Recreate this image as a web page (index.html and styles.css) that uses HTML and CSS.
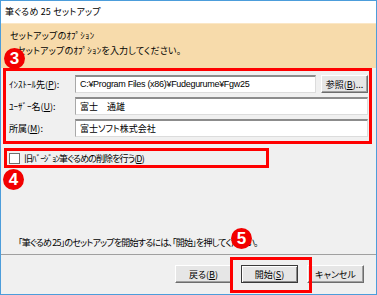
FILE: index.html
```html
<!DOCTYPE html>
<html lang="ja">
<head>
    <meta charset="UTF-8">
    <title>筆ぐるめ 25 セットアップ</title>
    <link rel="stylesheet" href="styles.css">
</head>
<body>
    <div class="window">
        <div class="titlebar">筆ぐるめ 25 セットアップ</div>

        <div class="header">
            <div class="header-title">セットアップのｵﾌﾟｼｮﾝ</div>
            <div class="header-desc">セットアップのｵﾌﾟｼｮﾝを入力してください。</div>
        </div>

        <div class="content">
            <div class="mark fields">
                <div class="row">
                    <label>ｲﾝｽﾄｰﾙ先(<u>P</u>):</label>
                    <div class="input input-path">C:¥Program Files (x86)¥Fudegurume¥Fgw25</div>
                    <button class="btn btn-browse">参照(<u>B</u>)...</button>
                </div>
                <div class="row">
                    <label>ﾕｰｻﾞｰ名(<u>U</u>):</label>
                    <div class="input">富士　通雄</div>
                </div>
                <div class="row">
                    <label>所属(<u>M</u>):</label>
                    <div class="input">富士ソフト株式会社</div>
                </div>
            </div>

            <div class="mark check-row">
                <span class="checkbox"></span>
                <span class="check-label">旧ﾊﾞｰｼﾞｮﾝ筆ぐるめの削除を行う(<u>D</u>)</span>
            </div>

            <p class="note">「筆ぐるめ 25」のセットアップを開始するには、「開始」を押してください。</p>
        </div>

        <div class="footer">
            <button class="btn">戻る(<u>B</u>)</button>
            <div class="mark-wrap">
                <button class="btn btn-default">開始(<u>S</u>)</button>
                <span class="mark-box"></span>
            </div>
            <button class="btn">キャンセル</button>
        </div>

        <span class="badge badge-3">3</span>
        <span class="badge badge-4">4</span>
        <span class="badge badge-5">5</span>
    </div>
</body>
</html>
```

FILE: styles.css
```css
* { box-sizing: border-box; }
body {
    margin: 0;
    font-family: "Noto Sans CJK JP", sans-serif;
    font-size: 9px; color: #000;
    font-feature-settings: "palt";
}
u { text-decoration-thickness: 1px; text-underline-offset: 1px; }

.window {
    position: relative; width: 377px; height: 295px;
    border: 1px solid #4c9ddb; background: #f0f0f0;
    display: flex; flex-direction: column;
}
.titlebar { height: 22px; background: #fff; padding-left: 4px; line-height: 22px; letter-spacing: 0.2px; }
.header {
    height: 45px; background: #f7dbab; border-top: 1px solid #fbe7c6;
    padding: 4px 0 0 9px; line-height: 15px; letter-spacing: 0.2px;
}
.header-desc { padding-left: 7px; }

.content { flex: 1; display: flex; flex-direction: column; padding: 0 4px 0 2px; }
.mark { border: 3px solid #ff0000; }
.fields { display: flex; flex-direction: column; gap: 4px; padding: 4px 1px 4px 3px; }
.row { display: flex; align-items: center; height: 18px; }
.row label { width: 66px; }
.input {
    flex: 1; height: 18px; background: #fff; padding-left: 4px; line-height: 15px;
    border: 1px solid #dcdcdc; border-top: 2px solid #8c8c8c; border-left-color: #a8a8a8;
}
.input-path { font-family: "Liberation Sans", "Noto Sans CJK JP", sans-serif; letter-spacing: -0.3px; }

.btn {
    font: inherit; color: inherit; height: 18px; padding: 0;
    background: #e6e6e6; cursor: pointer;
    border: 1px solid; border-color: #fff #6d6d6d #6d6d6d #fff;
    box-shadow: inset -1px -1px 0 #a0a0a0;
}
.btn-browse { width: 47px; margin-left: 5px; }

.check-row {
    display: flex; align-items: center; gap: 4px;
    width: 265px; height: 20px; margin: 4px 0 0 1px; padding-left: 2px;
}
.checkbox { width: 11px; height: 11px; background: #fff; border: 1px solid #707070; }
.check-label { letter-spacing: -0.9px; }

.note { margin: auto 0 4px 15px; line-height: 15px; letter-spacing: -0.8px; }

.footer {
    height: 40px; border-top: 1px solid #a0a0a0;
    display: flex; justify-content: flex-end; gap: 9px;
    padding: 10px 12px 0 0;
}
.footer .btn { width: 57px; }
.mark-wrap { position: relative; }
.btn-default { border-color: #3a3a3a; box-shadow: inset 1px 1px 0 #fff, inset -1px -1px 0 #8a8a8a; }
.mark-box {
    position: absolute; left: -11px; top: -8px; width: 82px; height: 36px;
    border: 3px solid #ff0000;
}

.badge {
    position: absolute; width: 21px; height: 21px; border-radius: 50%;
    background: #f20000; color: #fff; text-align: center;
    font: 900 17px/21px "Liberation Sans", sans-serif;
}
.badge-3 { left: 3px; top: 47px; }
.badge-4 { left: 2px; top: 168px; }
.badge-5 { left: 230px; top: 227px; }
```
